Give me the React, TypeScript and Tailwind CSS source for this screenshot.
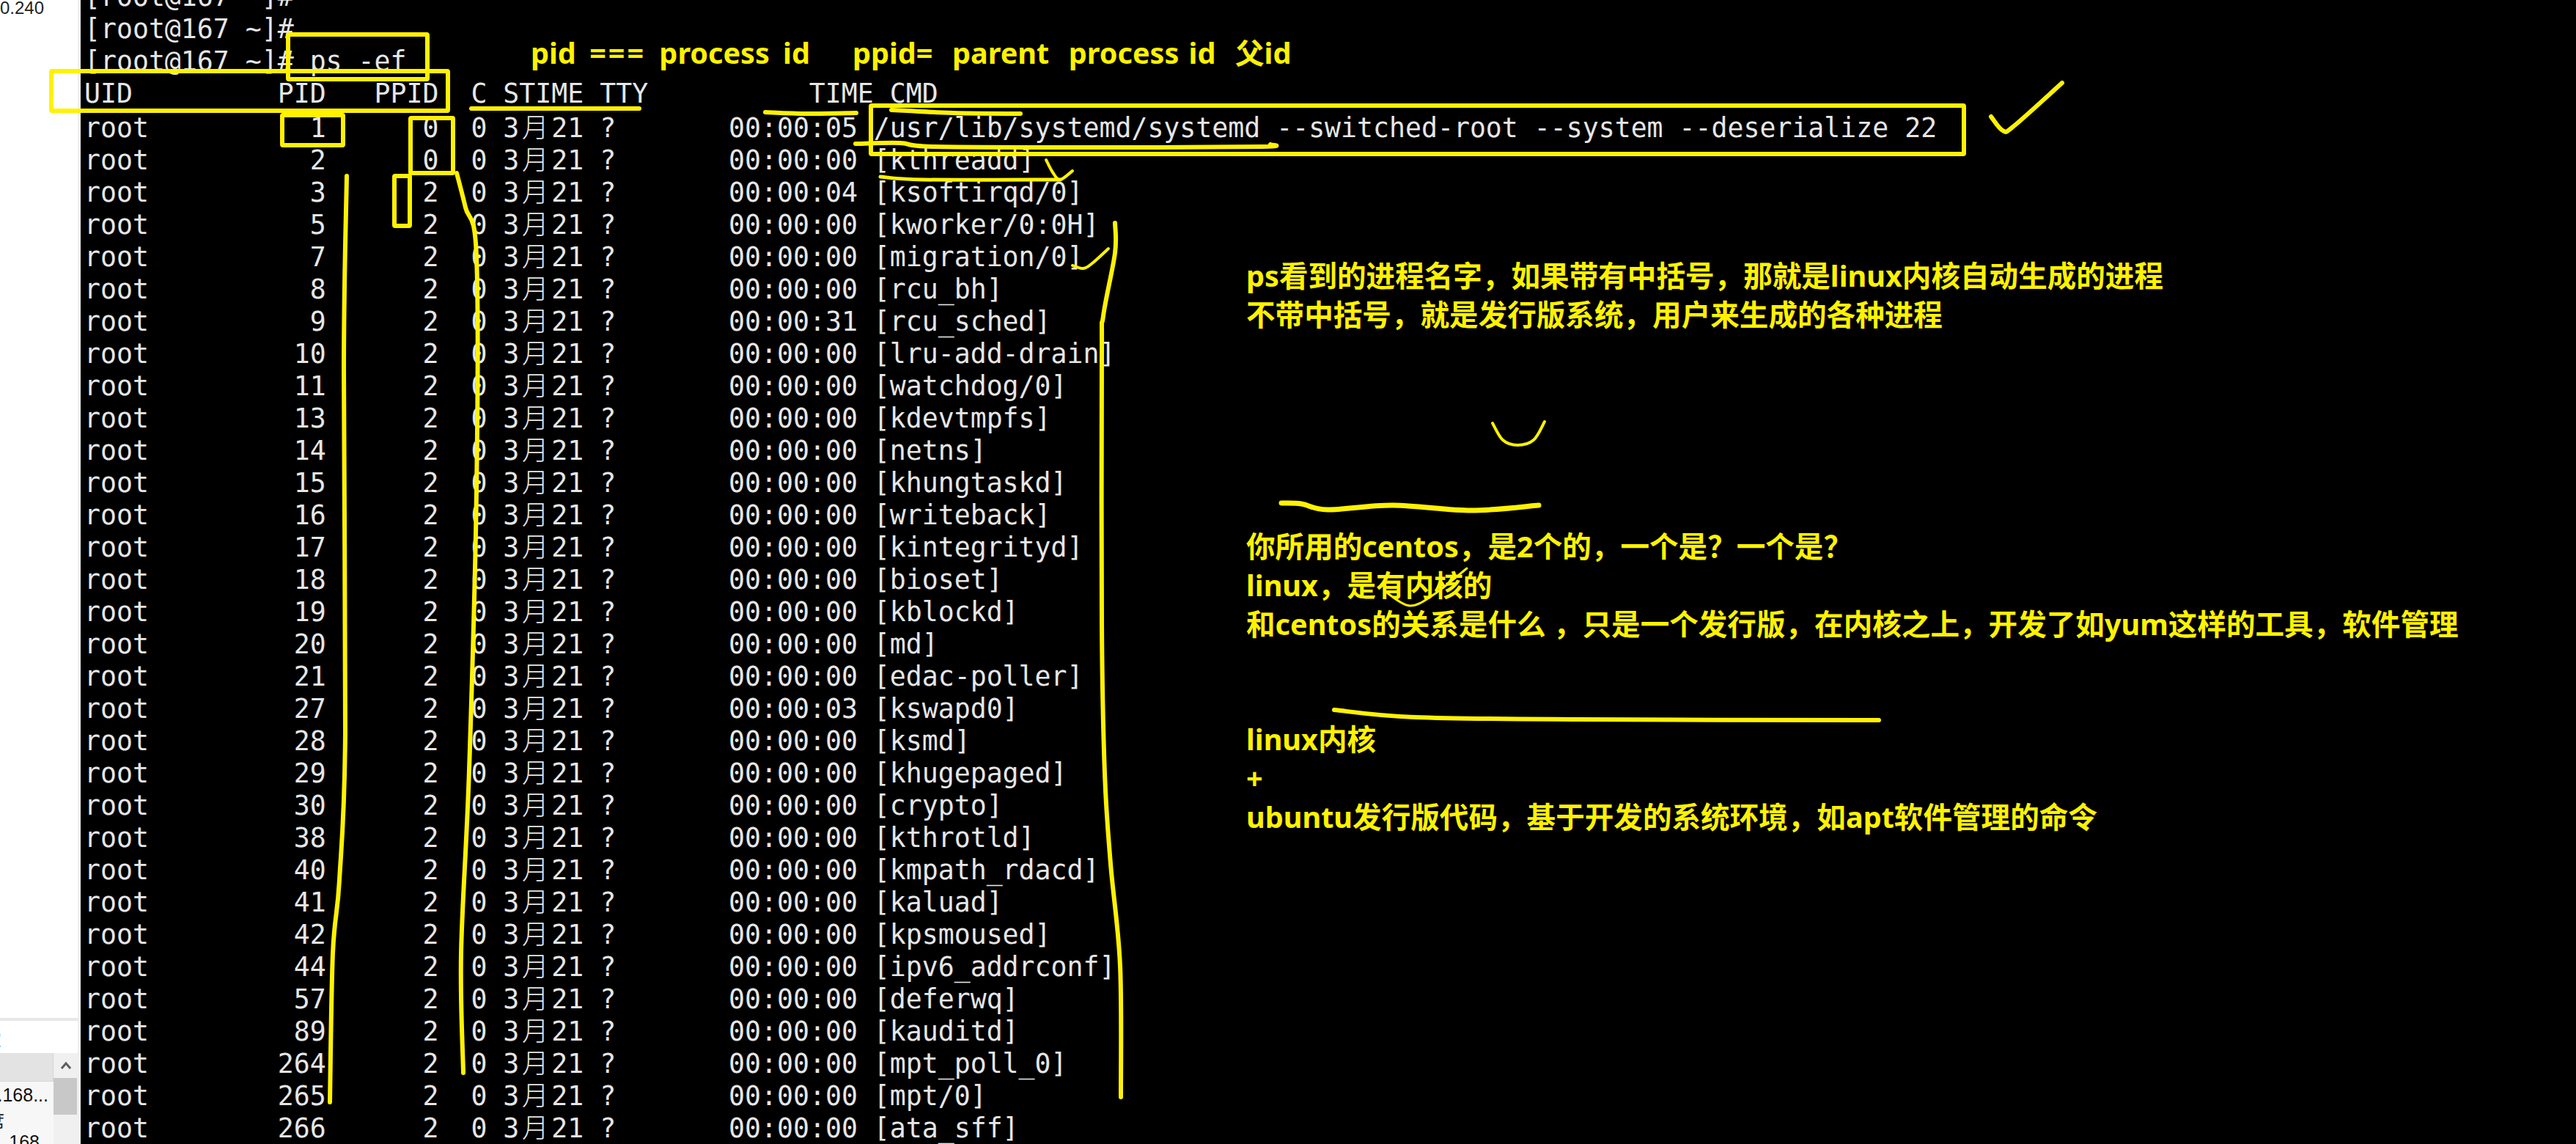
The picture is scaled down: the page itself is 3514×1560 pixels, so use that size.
import React from "react";

type Row = [number, number, string, string];

const ROWS: Row[] = [
  [1, 0, "05", "/usr/lib/systemd/systemd --switched-root --system --deserialize 22"],
  [2, 0, "00", "[kthreadd]"],
  [3, 2, "04", "[ksoftirqd/0]"],
  [5, 2, "00", "[kworker/0:0H]"],
  [7, 2, "00", "[migration/0]"],
  [8, 2, "00", "[rcu_bh]"],
  [9, 2, "31", "[rcu_sched]"],
  [10, 2, "00", "[lru-add-drain]"],
  [11, 2, "00", "[watchdog/0]"],
  [13, 2, "00", "[kdevtmpfs]"],
  [14, 2, "00", "[netns]"],
  [15, 2, "00", "[khungtaskd]"],
  [16, 2, "00", "[writeback]"],
  [17, 2, "00", "[kintegrityd]"],
  [18, 2, "00", "[bioset]"],
  [19, 2, "00", "[kblockd]"],
  [20, 2, "00", "[md]"],
  [21, 2, "00", "[edac-poller]"],
  [27, 2, "03", "[kswapd0]"],
  [28, 2, "00", "[ksmd]"],
  [29, 2, "00", "[khugepaged]"],
  [30, 2, "00", "[crypto]"],
  [38, 2, "00", "[kthrotld]"],
  [40, 2, "00", "[kmpath_rdacd]"],
  [41, 2, "00", "[kaluad]"],
  [42, 2, "00", "[kpsmoused]"],
  [44, 2, "00", "[ipv6_addrconf]"],
  [57, 2, "00", "[deferwq]"],
  [89, 2, "00", "[kauditd]"],
  [264, 2, "00", "[mpt_poll_0]"],
  [265, 2, "00", "[mpt/0]"],
  [266, 2, "00", "[ata_sff]"],
];

function Line({ children }: { children: React.ReactNode }) {
  return <div className="h-[44px] leading-[44px] whitespace-pre">{children}</div>;
}

function ProcessRow({ row }: { row: Row }) {
  const [pid, ppid, sec, cmd] = row;
  const left = "root" + String(pid).padStart(11, " ") + String(ppid).padStart(7, " ") + "  0 3";
  return (
    <Line>
      {left}
      <span className="inline-block w-[44px] text-center font-['Noto_Sans_CJK_SC',sans-serif] font-light">月</span>
      {"21 ?       00:00:" + sec + " " + cmd}
    </Line>
  );
}

function smooth(p: number[][]): string {
  let d = `M${p[0][0]} ${p[0][1]}`;
  for (let i = 0; i < p.length - 1; i++) {
    const a = p[Math.max(i - 1, 0)];
    const b = p[i];
    const c = p[i + 1];
    const e = p[Math.min(i + 2, p.length - 1)];
    d += ` C${b[0] + (c[0] - a[0]) / 6} ${b[1] + (c[1] - a[1]) / 6} ${c[0] - (e[0] - b[0]) / 6} ${c[1] - (e[1] - b[1]) / 6} ${c[0]} ${c[1]}`;
  }
  return d;
}

const BOXES = [
  [393, 47, 190, 61],
  [70, 97, 541, 54],
  [385, 157, 83, 41],
  [560, 161, 58, 75],
  [538, 240, 21, 68],
  [1188, 144, 1491, 66],
];

const STROKES: { p: number[][]; w: number }[] = [
  { p: [[643, 148], [872, 148]], w: 6 },
  { p: [[1044, 153], [1100, 155], [1168, 154]], w: 6 },
  { p: [[1216, 150], [1300, 154], [1392, 155]], w: 6 },
  { p: [[1167, 196], [1228, 195], [1274, 200], [1500, 201], [1721, 200], [1733, 197]], w: 6 },
  { p: [[1201, 241], [1260, 245], [1446, 245]], w: 5 },
  { p: [[1427, 218], [1436, 235], [1446, 245], [1463, 233]], w: 4 },
  { p: [[1463, 362], [1478, 366], [1490, 359], [1512, 339]], w: 4 },
  { p: [[1521, 304], [1521, 345], [1505, 431], [1503, 484], [1503, 851], [1507, 1055], [1515, 1178], [1528, 1317], [1529, 1496]], w: 6 },
  { p: [[473, 240], [469, 500], [471, 1000], [463, 1200], [454, 1300], [450, 1503]], w: 6 },
  { p: [[623, 236], [635, 283], [650, 350], [650, 670], [640, 1050], [629, 1300], [632, 1463]], w: 6 },
  { p: [[2716, 159], [2732, 178], [2747, 172], [2813, 113]], w: 6 },
  { p: [[2036, 577], [2050, 600], [2070, 607], [2092, 600], [2107, 575]], w: 4 },
  { p: [[1748, 686], [1775, 687], [1811, 695], [1900, 689], [2007, 696], [2099, 689]], w: 7 },
  { p: [[1890, 807], [1923, 826], [1957, 810], [2001, 775]], w: 3 },
  { p: [[1820, 968], [1929, 978], [2152, 981], [2563, 982]], w: 6 },
];

function Annotations() {
  return (
    <svg className="absolute inset-0" width={3514} height={1560} viewBox="0 0 3514 1560" fill="none" stroke="#fff200" strokeLinecap="round" strokeLinejoin="round">
      {BOXES.map(([x, y, w, h], i) => (
        <rect key={i} x={x} y={y} width={w} height={h} rx={1} strokeWidth={6} />
      ))}
      {STROKES.map((s, i) => (
        <path key={i} d={smooth(s.p)} strokeWidth={s.w} />
      ))}
    </svg>
  );
}

function Sidebar() {
  return (
    <div className="flex w-[110px] shrink-0 flex-col border-r-4 border-[#f0f0f0] bg-white font-['Liberation_Sans',sans-serif] overflow-hidden">
      <div className="h-[24px] text-[24px] leading-[22px] text-[#222] whitespace-pre">0.240</div>
      <div className="flex-1" />
      <div className="h-[4px] bg-[#e8e8e8]" />
      <div className="relative h-[44px] overflow-hidden">
        <span className="absolute -left-[22px] top-[10px] text-[24px] leading-[28px] text-[#2a6fc0] font-['Noto_Sans_CJK_SC',sans-serif]">宝</span>
      </div>
      <div className="flex h-[124px] overflow-hidden">
        <div className="flex w-[73px] shrink-0 flex-col bg-[#f7f7f7]">
          <div className="h-[39px] shrink-0 border-r border-b border-[#c9d8e8] bg-[#e3e3e3]" />
          <div className="flex h-[37px] shrink-0 items-center justify-end overflow-hidden pr-[7px] text-[25px] text-[#111] whitespace-pre">.168...</div>
          <div className="relative h-[30px] shrink-0 overflow-hidden">
            <span className="absolute -left-[19px] top-0 text-[25px] leading-[30px] text-[#222] font-['Noto_Sans_CJK_SC',sans-serif]">席</span>
          </div>
          <div className="flex h-[18px] shrink-0 items-start justify-end overflow-hidden pr-[19px] text-[25px] leading-[30px] text-[#111]">.168</div>
        </div>
        <div className="flex flex-1 flex-col bg-[#f0f0f0]">
          <div className="flex h-[34px] items-center justify-center">
            <svg width="14" height="10" viewBox="0 0 14 10" fill="none" stroke="#606060" strokeWidth="3">
              <path d="M1 9 L7 2 L13 9" />
            </svg>
          </div>
          <div className="h-[50px] w-[32px] bg-[#c8c8c8]" />
        </div>
      </div>
    </div>
  );
}

function Note({ children }: { children: React.ReactNode }) {
  return <div className="h-[53px] leading-[53px] whitespace-pre">{children}</div>;
}

export default function App() {
  return (
    <div className="relative flex h-[1560px] w-[3514px] overflow-hidden bg-black">
      <Sidebar />
      <div className="flex-1 overflow-hidden bg-black pl-[5px] font-['DejaVu_Sans_Mono','Noto_Sans_CJK_SC',monospace] text-[36.5px] text-[#e6e6e6]">
        <div className="-mt-[26px]">
          <Line>[root@167 ~]#</Line>
          <Line>[root@167 ~]#</Line>
          <Line>[root@167 ~]# ps -ef</Line>
          <Line>{"UID" + " ".repeat(9) + "PID" + "   PPID" + "  C STIME TTY" + " ".repeat(10) + "TIME CMD"}</Line>
          {ROWS.map((r) => (
            <ProcessRow key={r[0]} row={r} />
          ))}
        </div>
      </div>
      <Annotations />
      <div className="absolute left-0 top-0 font-['Noto_Sans','Noto_Sans_CJK_SC',sans-serif] text-[39.6px] font-bold text-[#fff200]">
        <div className="absolute left-[724px] top-[46px] leading-[53px] whitespace-pre [word-spacing:8px]">
          pid <span className="tracking-[3px]">===</span> process id
        </div>
        <div className="absolute left-[1163px] top-[46px] leading-[53px] whitespace-pre [word-spacing:3px]">ppid=  parent  process id  父id</div>
        <div className="absolute left-[1700px] top-[350px]">
          <Note>ps看到的进程名字，如果带有中括号，那就是linux内核自动生成的进程</Note>
          <Note>不带中括号，就是发行版系统，用户来生成的各种进程</Note>
        </div>
        <div className="absolute left-[1700px] top-[719px]">
          <Note>你所用的centos，是2个的，一个是？一个是？</Note>
          <Note>linux，是有内核的</Note>
          <Note>和centos的关系是什么 ，只是一个发行版，在内核之上，开发了如yum这样的工具，软件管理</Note>
        </div>
        <div className="absolute left-[1700px] top-[982px]">
          <Note>linux内核</Note>
          <Note>+</Note>
          <Note>ubuntu发行版代码，基于开发的系统环境，如apt软件管理的命令</Note>
        </div>
      </div>
    </div>
  );
}
